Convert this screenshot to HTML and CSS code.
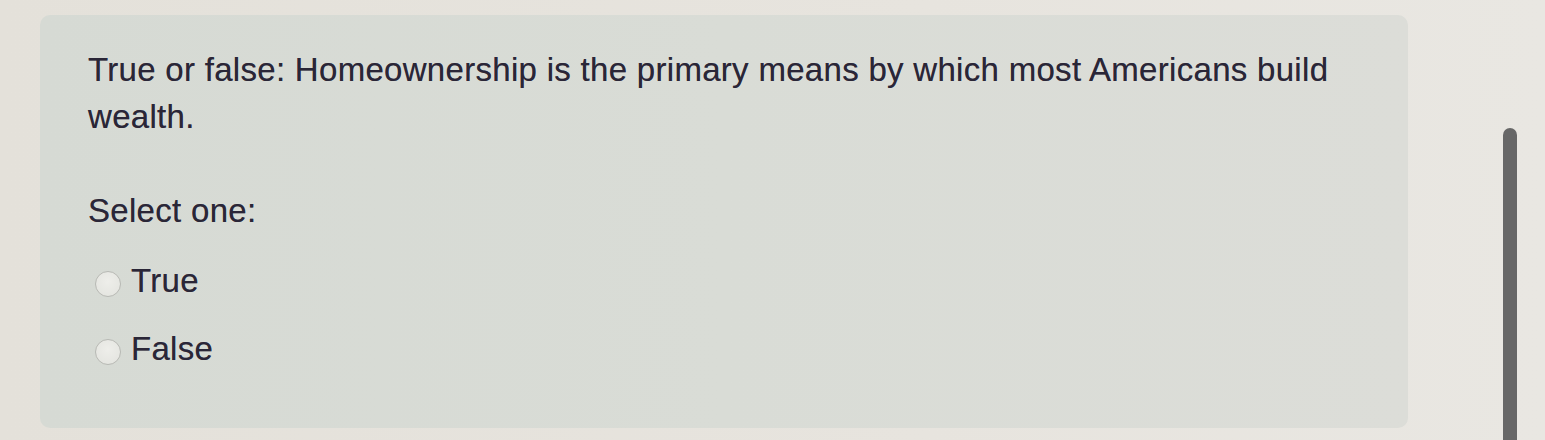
FILE: index.html
```html
<!DOCTYPE html>
<html lang="en">
<head>
    <meta charset="UTF-8">
    <meta name="viewport" content="width=device-width, initial-scale=1.0">
    <title>Quiz question</title>
    <link rel="stylesheet" href="styles.css">
</head>
<body>
    <div class="page">
        <div class="question">
            <p class="question-text">True or false: Homeownership is the primary means by which most Americans build wealth.</p>
            <p class="prompt">Select one:</p>
            <div class="answers">
                <label class="answer">
                    <input type="radio" name="q1" value="1">
                    <span>True</span>
                </label>
                <label class="answer">
                    <input type="radio" name="q1" value="0">
                    <span>False</span>
                </label>
            </div>
        </div>
    </div>
    <div class="scrollbar"></div>
</body>
</html>
```

FILE: styles.css
```css
body {
    font-family: "Liberation Sans", Arial, sans-serif;
    margin: 0;
    height: 440px;
    overflow: hidden;
    display: flex;
    background: linear-gradient(90deg, #e4e1da 0%, #e7e4de 60%, #e9e7e2 100%);
    color: #2a2637;
}
.page {
    padding: 15px 0 0 40px;
}
.question {
    width: 1272px;
    height: 331px;
    padding: 31px 48px 51px 48px;
    border-radius: 10px;
    background: linear-gradient(90deg, #d6dad4 0%, #d9dcd6 50%, #dcddd8 100%);
}
.question-text,
.prompt,
.answer {
    font-size: 33px;
    line-height: 47px;
    letter-spacing: 0.3px;
    text-shadow: 0 0 0.6px rgba(42, 38, 55, 0.6);
}
.question-text {
    margin: 0;
}
.prompt {
    margin: 47px 0 0 0;
}
.answers {
    margin-top: 23px;
    display: flex;
    flex-direction: column;
    gap: 21px;
}
.answer {
    display: flex;
    align-items: center;
    gap: 10px;
    padding-left: 7px;
}
.answer input {
    appearance: none;
    -webkit-appearance: none;
    margin: 6px 0 0 0;
    width: 26px;
    height: 26px;
    border-radius: 50%;
    border: 1px solid #b8b9b4;
    background: radial-gradient(circle at 50% 40%, #eeeeea 0%, #e2e3de 100%);
    box-sizing: border-box;
}
.scrollbar {
    margin: 128px 0 0 95px;
    width: 14px;
    height: 320px;
    border-radius: 7px 7px 0 0;
    background: #676767;
}
```
